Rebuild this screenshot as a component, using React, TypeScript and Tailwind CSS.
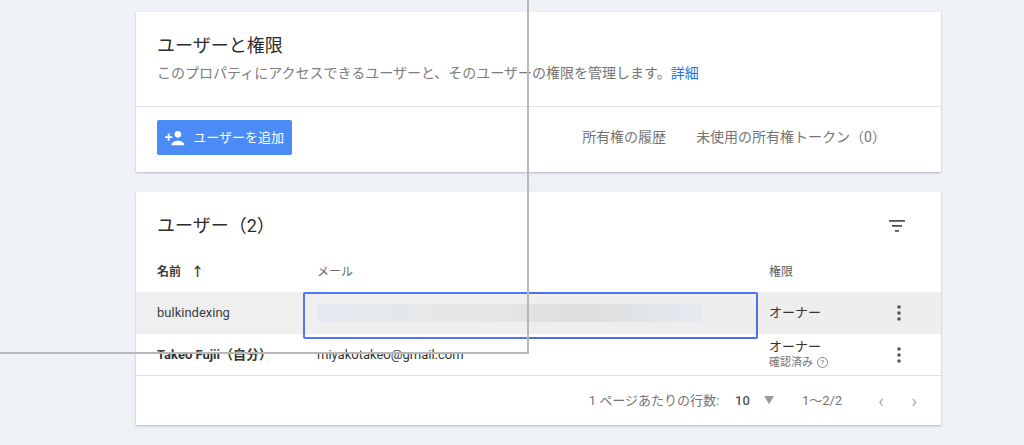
import React from "react";

const font = { fontFamily: '"Roboto","Noto Sans CJK JP",sans-serif' };

function Dots() {
  return (
    <svg width="4" height="16" viewBox="0 0 4 16"><circle cx="2" cy="2" r="1.8" fill="#555" /><circle cx="2" cy="8" r="1.8" fill="#555" /><circle cx="2" cy="14" r="1.8" fill="#555" /></svg>
  );
}

export default function App() {
  return (
    <div className="relative w-[1024px] h-[445px] bg-[#eef1f5] overflow-hidden" style={font}>
      <div className="ml-[136px] w-[805px] pt-[12px] flex flex-col gap-[20px]">
        <div className="bg-white shadow-[0_1px_2px_rgba(0,0,0,0.25)] h-[160px] flex flex-col">
          <div className="px-[21px] pt-[22px] h-[95px] border-b border-[#e0e0e0]">
            <div className="text-[18px] text-[#212121] leading-[24px]">ユーザーと権限</div>
            <div className="text-[14px] text-[#757575] mt-[5px] whitespace-nowrap">このプロパティにアクセスできるユーザーと、そのユーザーの権限を管理します。<span className="text-[#1a73e8]">詳細</span></div>
          </div>
          <div className="flex items-center px-[21px] pt-[13px]">
            <button className="h-[35px] w-[135px] bg-[#4285f4] rounded-[2px] text-white text-[13px] flex items-center gap-[8px] px-[8px] whitespace-nowrap">
              <svg width="22" height="16" viewBox="0 0 22 16" fill="white"><path d="M0 6h3V3h2v3h3v2H5v3H3V8H0z" /><circle cx="14" cy="4" r="3.6" /><path d="M7 16c0-3.5 4-5 7-5s7 1.5 7 5z" /></svg>
              ユーザーを追加
            </button>
            <div className="ml-auto flex gap-[30px] text-[14px] text-[#757575] pr-[34px]">
              <span>所有権の履歴</span><span>未使用の所有権トークン（0）</span>
            </div>
          </div>
        </div>
        <div className="bg-white shadow-[0_1px_2px_rgba(0,0,0,0.25)] h-[233px] flex flex-col">
          <div className="flex items-center px-[21px] pt-[15px] h-[52px]">
            <div className="text-[18px] text-[#212121]">ユーザー（2）</div>
            <svg className="ml-auto mr-[15px]" width="16" height="12" viewBox="0 0 16 12" fill="#555"><rect x="0" y="0" width="16" height="1.8" /><rect x="3" y="5" width="10" height="1.8" /><rect x="6" y="10" width="4" height="1.8" /></svg>
          </div>
          <div className="flex items-center h-[48px] text-[12px] text-[#616161] pt-[8px]">
            <div className="w-[171px] pl-[21px] font-bold text-[#333] flex items-center gap-[10px]">名前 <span className="text-[13px]">↑</span></div>
            <div className="w-[462px] pl-[10px]">メール</div>
            <div>権限</div>
          </div>
          <div className="flex items-center h-[42px] bg-[#eeeeee] text-[13px] text-[#333]">
            <div className="w-[171px] pl-[21px]">bulkindexing</div>
            <div className="w-[462px] pl-[10px] flex"><div className="w-[385px] h-[18px] bg-[linear-gradient(90deg,#e3e9ef,#e6e6e6_40%,#dedede_70%,#e4ebf1)]" /></div>
            <div className="w-[128px]">オーナー</div>
            <Dots />
          </div>
          <div className="flex items-center h-[42px] text-[13px] text-[#333] border-b border-[#e0e0e0]">
            <div className="w-[171px] pl-[21px] font-bold">Takeo Fujii（自分）</div>
            <div className="w-[462px] pl-[10px]">miyakotakeo@gmail.com</div>
            <div className="w-[128px] leading-[16px]">オーナー<div className="text-[11px] text-[#757575] flex items-center gap-[4px]">確認済み <span className="inline-flex w-[11px] h-[11px] rounded-full border border-[#888] text-[8px] items-center justify-center">?</span></div></div>
            <Dots />
          </div>
          <div className="flex items-center justify-end flex-1 text-[13px] text-[#757575] pr-[24px]">
            <span>1 ページあたりの行数:</span>
            <span className="ml-[16px] font-medium text-[#555]">10</span>
            <span className="ml-[14px] text-[10px] text-[#999]">▼</span>
            <span className="ml-[28px]">1〜2/2</span>
            <span className="ml-[36px] text-[18px] text-[#aaa]">‹</span>
            <span className="ml-[28px] text-[18px] text-[#aaa]">›</span>
          </div>
        </div>
      </div>
      <div className="absolute left-[303px] top-[292px] w-[455px] h-[47px] border-2 border-[#4d6ef5] rounded-[2px]" />
      <div className="absolute left-[-2px] top-[-2px] w-[531px] h-[356px] border-2 border-[#b8b8b8] bg-white/5" />
    </div>
  );
}
